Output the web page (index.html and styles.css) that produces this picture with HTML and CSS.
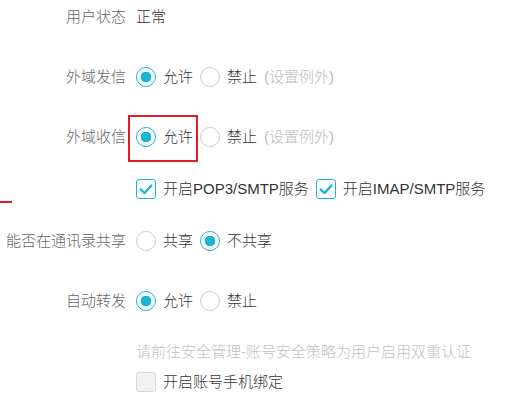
FILE: index.html
```html
<!DOCTYPE html>
<html lang="zh-CN">
<head>
    <meta charset="UTF-8" />
    <title>用户设置</title>
    <link rel="stylesheet" href="styles.css">
</head>
<body>
    <div class="form">
        <div class="row first">
            <div class="label">用户状态</div>
            <div class="field value">正常</div>
        </div>

        <div class="row">
            <div class="label">外域发信</div>
            <div class="field">
                <label class="opt"><span class="radio on"></span>允许</label>
                <label class="opt"><span class="radio"></span>禁止</label>
                <span class="note">(设置例外)</span>
            </div>
        </div>

        <div class="row">
            <div class="label">外域收信</div>
            <div class="field">
                <label class="opt marked"><span class="radio on"></span>允许</label>
                <label class="opt"><span class="radio"></span>禁止</label>
                <span class="note">(设置例外)</span>
            </div>
        </div>

        <div class="row tight">
            <div class="label"><span class="flag"></span></div>
            <div class="field">
                <label class="opt"><span class="check on"><svg viewBox="0 0 20 20"><path d="M4 10.5 L8.5 14.5 L16 6" /></svg></span>开启POP3/SMTP服务</label>
                <label class="opt"><span class="check on"><svg viewBox="0 0 20 20"><path d="M4 10.5 L8.5 14.5 L16 6" /></svg></span>开启IMAP/SMTP服务</label>
            </div>
        </div>

        <div class="row tight">
            <div class="label">能否在通讯录共享</div>
            <div class="field">
                <label class="opt"><span class="radio"></span>共享</label>
                <label class="opt"><span class="radio on"></span>不共享</label>
            </div>
        </div>

        <div class="row">
            <div class="label">自动转发</div>
            <div class="field">
                <label class="opt"><span class="radio on"></span>允许</label>
                <label class="opt"><span class="radio"></span>禁止</label>
            </div>
        </div>

        <div class="row hint-row">
            <div class="label"></div>
            <div class="field hint">请前往安全管理-账号安全策略为用户启用双重认证</div>
        </div>

        <div class="row last">
            <div class="label"></div>
            <div class="field">
                <label class="opt"><span class="check off"></span>开启账号手机绑定</label>
            </div>
        </div>
    </div>
</body>
</html>
```

FILE: styles.css
```css
body {
    margin: 0;
    background: #fff;
    font-family: "Liberation Sans", "Noto Sans CJK SC", sans-serif;
    font-size: 15px;
    font-weight: 300;
    color: #333;
}

.form {
    padding-top: 2px;
}

.row {
    display: grid;
    grid-template-columns: 126px 1fr;
    column-gap: 10px;
    height: 30px;
    line-height: 30px;
    margin-top: 30px;
}

.row.first {
    margin-top: 0;
}

.row.tight {
    margin-top: 22px;
}

.row.hint-row {
    margin-top: 21px;
}

.row.last {
    margin-top: 0;
}

.label {
    text-align: right;
    color: #666;
    white-space: nowrap;
}

.field {
    display: flex;
    align-items: center;
    white-space: nowrap;
}

.value {
    color: #333;
}

.opt {
    display: flex;
    align-items: center;
    gap: 7px;
    margin-right: 7px;
    color: #333;
}

.radio {
    width: 20px;
    height: 20px;
    box-sizing: border-box;
    border: 1px solid #ccc;
    border-radius: 50%;
    background: #fff;
}

.radio.on {
    border: 1.5px solid #1ab3db;
    background: radial-gradient(circle, #1ab3db 0, #1ab3db 5px, #fff 5.6px);
}

.check {
    width: 20px;
    height: 20px;
    box-sizing: border-box;
    border-radius: 3px;
    display: flex;
}

.check.on {
    border: 1.5px solid #1ab3db;
    background: #fff;
}

.check.on svg {
    width: 100%;
    height: 100%;
}

.check.on path {
    fill: none;
    stroke: #1ab3db;
    stroke-width: 2.6;
    stroke-linecap: round;
    stroke-linejoin: round;
}

.check.off {
    border: 1px solid #d9d9d9;
    background: #f2f2f2;
}

.note {
    color: #bbb;
}

.hint {
    color: #c2c2c2;
}

.marked {
    position: relative;
}

.marked::after {
    content: '';
    position: absolute;
    left: -8px;
    right: -5px;
    top: -7px;
    bottom: -10px;
    border: 2px solid #e21d26;
}

.flag {
    display: block;
    width: 12px;
    height: 2px;
    margin-top: 27px;
    background: #e21d26;
}
```
